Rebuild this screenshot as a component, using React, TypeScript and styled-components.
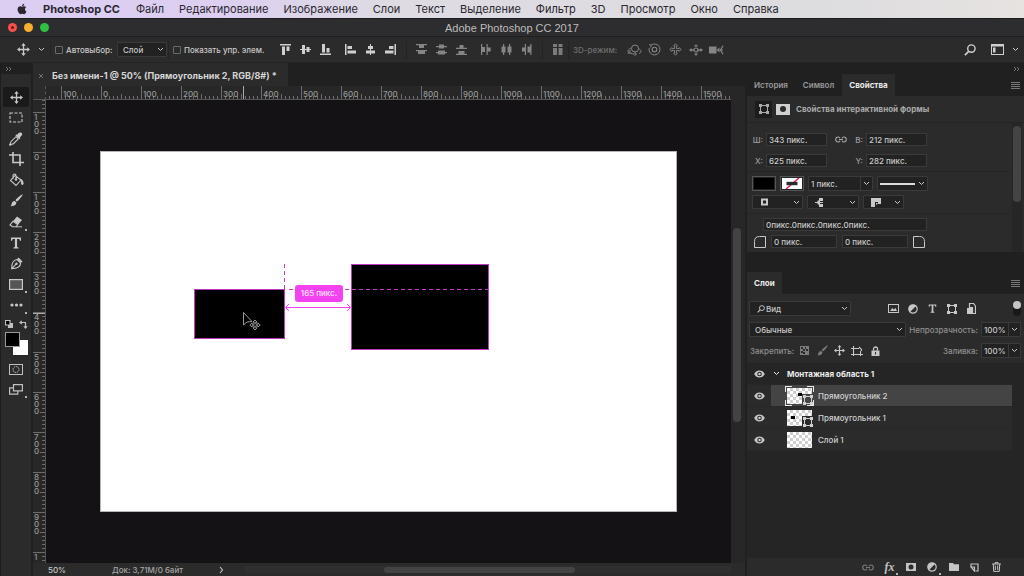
import React from "react";
import styled, { createGlobalStyle, css } from "styled-components";
import { FaApple } from "react-icons/fa";

const c = {
  panel: "#2b2b2b",
  dark: "#202021",
  list: "#252525",
  field: "#222222",
  line: "#3a3a3a",
  text: "#c9c9c9",
  bright: "#ececec",
  dim: "#8a8a8a",
  canvas: "#141215",
  magenta: "#f343f1",
  guide: "#c13ac6",
};

const Global = createGlobalStyle`
  *, *::before, *::after { box-sizing: border-box; }
  body { margin: 0; background: ${c.dark}; overflow: hidden; }
  button, input, select { font: inherit; color: inherit; margin: 0; padding: 0; }
  ul { list-style: none; margin: 0; padding: 0; }
  svg { display: block; flex: none; }
`;

const App = styled.div`
  height: 100vh;
  display: flex;
  flex-direction: column;
  font-family: Inter, "Liberation Sans", sans-serif;
  font-size: 8px;
  font-weight: 500;
  line-height: 12px;
  color: ${c.text};
  background: ${c.dark};
  cursor: default;
`;

/* ---------- System menu ---------- */
const MenuBar = styled.nav`
  flex: none;
  display: flex;
  align-items: center;
  gap: 15px;
  height: 18px;
  padding-left: 16px;
  background: linear-gradient(90deg, #dccdf3 0%, #dccff0 22%, #dedbe3 38%, #dddcdf 80%, #e6e3e1 100%);
  color: #2a2730;
  font-size: 11px;
  font-weight: 400;
  line-height: 16px;
`;
const MenuItem = styled.a<{ $bold?: boolean }>`
  color: inherit;
  text-decoration: none;
  white-space: nowrap;
  font-weight: ${(p) => (p.$bold ? 700 : 400)};
  ${(p) => p.$bold && css`padding-right: 1px;`}
`;

/* ---------- Title bar ---------- */
const TitleBar = styled.header`
  flex: none;
  display: grid;
  grid-template-columns: 1fr auto 1fr;
  align-items: center;
  height: 19px;
  padding: 0 8px;
  background: #2d2c2e;
  border-top: 1px solid #1d1c1e;
  border-bottom: 1px solid #1e1e1e;
  color: #bdbdbd;
`;
const Lights = styled.div`
  display: flex;
  gap: 7px;
`;
const Light = styled.button<{ $color: string }>`
  width: 9px;
  height: 9px;
  border: 0;
  border-radius: 50%;
  display: grid;
  place-items: center;
  background: ${(p) => p.$color};
`;
const Title = styled.h1`
  margin: 0;
  font-family: "Liberation Sans", sans-serif;
  font-size: 11px;
  font-weight: 400;
  line-height: 16px;
`;

/* ---------- Options bar ---------- */
const Options = styled.div`
  flex: none;
  display: flex;
  align-items: center;
  height: 26px;
  padding: 0 4px 0 13px;
  background: ${c.panel};
  border-bottom: 1px solid #242424;
  white-space: nowrap;
`;
const IconGroup = styled.div<{ $dim?: boolean; $end?: boolean }>`
  display: flex;
  margin-right: 5px;
  color: ${(p) => (p.$dim ? "#858585" : "#cfcfcf")};
  ${(p) => p.$end && css`margin: 0 0 0 auto;`}
`;
const IconButton = styled.button<{ $w?: number; $h?: number; $active?: boolean; $dim?: boolean }>`
  flex: none;
  position: relative;
  width: ${(p) => p.$w ?? 20}px;
  height: ${(p) => p.$h ?? 20}px;
  display: grid;
  place-items: center;
  border: 0;
  border-radius: 2px;
  background: ${(p) => (p.$active ? "#1a1a1b" : "transparent")};
  ${(p) => p.$dim && css`color: #7b7b7b;`}
`;
const EffectsButton = styled(IconButton)`
  font-family: "Liberation Serif", serif;
  font-size: 12px;
  font-style: italic;
  font-weight: 700;
`;
const Divider = styled.span`
  width: 1px;
  height: 18px;
  margin: 0 4px 0 1px;
  background: #242424;
`;
const CheckLabel = styled.label<{ $w: number }>`
  display: flex;
  align-items: center;
  gap: 3px;
  width: ${(p) => p.$w}px;
`;
const Check = styled.input`
  appearance: none;
  width: 8px;
  height: 8px;
  border: 1px solid #6a6a6a;
  border-radius: 1px;
`;
const ModeLabel = styled.span`
  width: 51px;
  color: #6f6f6f;
`;

/* ---------- Fields ---------- */
const SelectWrap = styled.span<{ $w?: number; $h?: number; $split?: boolean; $inset?: number }>`
  display: grid;
  grid-template-columns: minmax(0, 1fr) 12px;
  grid-template-rows: 100%;
  align-items: center;
  flex: none;
  width: ${(p) => p.$w ?? 50}px;
  height: ${(p) => p.$h ?? 15}px;
  border: 1px solid ${c.line};
  border-radius: 1px;
  background: ${c.field};
  color: ${c.text};
  & > select, & > input {
    grid-row: 1;
    grid-column: ${(p) => (p.$split ? "1 / 2" : "1 / 3")};
    appearance: none;
    width: 100%;
    height: 100%;
    border: 0;
    background: transparent;
    padding-left: ${(p) => p.$inset ?? 5}px;
    outline: 0;
  }
  & > input { padding-left: 2px; }
  & > svg, & > button { grid-row: 1; grid-column: 2; justify-self: center; }
`;
const SelectGlyph = styled.span<{ $flush?: boolean }>`
  grid-row: 1;
  grid-column: 1;
  padding-left: ${(p) => (p.$flush ? 2 : 7)}px;
  pointer-events: none;
`;
const DropButton = styled.button`
  width: 12px;
  height: 100%;
  display: grid;
  place-items: center;
  border: 0;
  border-left: 1px solid ${c.line};
  background: transparent;
`;
const Field = styled.input<{ $w?: number }>`
  flex: none;
  width: ${(p) => p.$w ?? 61}px;
  height: 13px;
  && { padding: 0 2px; }
  border: 1px solid ${c.line};
  background: ${c.field};
  color: ${c.text};
`;

/* ---------- Workspace ---------- */
const Workspace = styled.main`
  flex: 1;
  min-height: 0;
  display: flex;
`;
const Toolbox = styled.aside`
  flex: none;
  width: 31px;
  display: flex;
  flex-direction: column;
  background: ${c.panel};
  border-left: 1px solid #1d1d1d;
`;
const Strip = styled.div<{ $right?: boolean }>`
  flex: none;
  display: flex;
  align-items: center;
  justify-content: ${(p) => (p.$right ? "flex-end" : "flex-start")};
  height: 11px;
  padding: 0 4px;
  background: ${c.dark};
  color: #8c8c8c;
`;
const ToolList = styled.div`
  display: flex;
  flex-direction: column;
  justify-content: space-between;
  height: 228px;
  margin: 13px 2px 0;
  color: #c8c8c8;
`;
const ToolFoot = styled.div`
  display: flex;
  flex-direction: column;
  align-items: center;
  margin: 2px 2px 0;
  color: #c0c0c0;
`;
const SwapRow = styled.div`
  display: flex;
  gap: 6px;
  height: 14px;
  align-items: center;
`;
const Swatches = styled.div`
  display: grid;
  grid-template-columns: 8px 7px 8px;
  grid-template-rows: 8px 7px 8px;
  margin: 1px 0 4px;
`;
const Swatch = styled.button<{ $back?: boolean }>`
  grid-area: ${(p) => (p.$back ? "2 / 2 / 4 / 4" : "1 / 1 / 3 / 3")};
  border: 1px solid ${(p) => (p.$back ? "#fff" : "#999")};
  background: ${(p) => (p.$back ? "#fff" : "#000")};
`;

const Document = styled.section`
  flex: 1;
  min-width: 0;
  display: grid;
  grid-template-columns: 13px minmax(0, 1fr) 14px;
  grid-template-rows: 23px 14px minmax(0, 1fr) 13px;
  margin: 0 2px;
  background: ${c.panel};
`;
const TabBar = styled.div`
  grid-column: 1 / 4;
  display: flex;
  background: ${c.dark};
`;
const DocTab = styled.div`
  display: flex;
  align-items: center;
  gap: 8px;
  width: 255px;
  padding: 3px 0 0 5px;
  background: ${c.panel};
  color: #d6d6d6;
  font-size: 9px;
  font-weight: 700;
  white-space: nowrap;
`;
const RulerCorner = styled.div`
  border-right: 1px dashed #555;
  border-bottom: 1px solid #555;
  background: ${c.panel};
`;
const tick = (dir: string) => `linear-gradient(to ${dir}, #6c6c6c 1px, transparent 1px)`;
const RulerTop = styled.div`
  display: flex;
  overflow: hidden;
  padding-left: 15px;
  border-bottom: 1px solid #555;
  background:
    ${tick("right")} 3px 100% / 4px 3px repeat-x,
    ${tick("right")} 35px 100% / 40px 5px repeat-x,
    linear-gradient(#aaa, #aaa) 197px 0 / 1px 13px no-repeat,
    #272727;
  color: #979797;
`;
const TopMark = styled.span`
  flex: 0 0 40px;
  border-left: 1px solid #6c6c6c;
  padding: 3px 0 0 1px;
  line-height: 10px;
`;
const RulerLeft = styled.div`
  overflow: hidden;
  padding-top: 12px;
  border-right: 1px solid #555;
  background:
    ${tick("bottom")} 100% 0 / 3px 4px repeat-y,
    ${tick("bottom")} 100% 32px / 5px 40px repeat-y,
    linear-gradient(#aaa, #aaa) 0 213px / 12px 1px no-repeat,
    #272727;
  color: #979797;
`;
const LeftMark = styled.span`
  display: block;
  height: 40px;
  border-top: 1px solid #6c6c6c;
  padding: 1px 0 0 1px;
  line-height: 7px;
  white-space: pre-line;
`;
const Canvas = styled.div`
  overflow: hidden;
  padding: 51px 54px;
  background: ${c.canvas};
`;
const Artboard = styled.div`
  position: relative;
  width: 577px;
  height: 361px;
  background: #fff;
  border: 1px solid #b5b5b5;
`;
const Shape = styled.div<{ $x: number; $y: number; $w: number; $h: number }>`
  position: absolute;
  left: ${(p) => p.$x}px;
  top: ${(p) => p.$y}px;
  width: ${(p) => p.$w}px;
  height: ${(p) => p.$h}px;
  background: #000;
  border: 1px solid ${c.guide};
`;
const Guides = styled.svg`
  position: absolute;
  left: 93px;
  top: 112px;
`;
const Distance = styled.output`
  position: absolute;
  left: 194px;
  top: 133px;
  width: 48px;
  height: 17px;
  border-radius: 3px;
  background: ${c.magenta};
  color: #ffe3ff;
  line-height: 17px;
  text-align: center;
`;
const Cursor = styled.svg`
  position: absolute;
  left: 141px;
  top: 159px;
`;
const VScroll = styled.div`
  grid-column: 3;
  grid-row: 2 / 4;
  padding: 142px 4px 0 2px;
  background: #272727;
`;
const Thumb = styled.div<{ $w: string; $h: string; $color?: string }>`
  width: ${(p) => p.$w};
  height: ${(p) => p.$h};
  border-radius: 4px;
  background: ${(p) => p.$color ?? "#434343"};
`;
const Status = styled.footer`
  grid-column: 1 / 4;
  display: flex;
  align-items: center;
  padding-left: 15px;
  background: ${c.panel};
`;
const Zoom = styled.input`
  width: 32px;
  height: 12px;
  border: 0;
  background: transparent;
`;
const DocSize = styled.span`
  width: 117px;
  padding-left: 32px;
  white-space: nowrap;
  color: #a5a5a5;
`;
const HTrack = styled.div`
  flex: 1;
  margin-right: 14px;
  padding: 1px 0 0 20%;
  background: #2f2f2f;
`;

/* ---------- Panels ---------- */
const Dock = styled.aside`
  flex: none;
  width: 277px;
  display: flex;
  flex-direction: column;
  background: ${c.dark};
`;
const Tabs = styled.div`
  flex: none;
  display: flex;
  gap: 1px;
  height: 22px;
  padding-right: 4px;
`;
const Tab = styled.button<{ $active?: boolean }>`
  padding: 0 7px;
  border: 0;
  background: ${(p) => (p.$active ? c.panel : "transparent")};
  color: ${(p) => (p.$active ? c.bright : "#9a9a9a")};
  font-weight: ${(p) => (p.$active ? 700 : 600)};
`;
const PanelMenu = styled.button`
  margin-left: auto;
  border: 0;
  background: transparent;
  color: #777;
`;
const Properties = styled.section`
  display: flex;
  flex-direction: column;
  height: 156px;
  margin-bottom: 20px;
  background: ${c.panel};
`;
const PropHead = styled.div`
  display: flex;
  align-items: center;
  height: 27px;
  padding-left: 8px;
  border-bottom: 1px solid #242424;
  color: #a9a9a9;
  & > h2 { margin: 0 0 0 6px; font-size: 8px; font-weight: 700; }
`;
const ModeIcon = styled.button<{ $active?: boolean }>`
  display: grid;
  place-items: center;
  width: ${(p) => (p.$active ? 17 : 14)}px;
  height: ${(p) => (p.$active ? 17 : 11)}px;
  margin-right: ${(p) => (p.$active ? 4 : 0)}px;
  border: 0;
  background: ${(p) => (p.$active ? "#1c1c1c" : "#d0d0d0")};
`;
const PropBody = styled.div`
  flex: 1;
  display: flex;
  justify-content: space-between;
  padding-right: 2px;
`;
const PropRows = styled.div`
  flex: 1;
  margin-right: 2px;
`;
const PropGroup = styled.div<{ $top: number; $gap: number }>`
  display: flex;
  flex-direction: column;
  gap: ${(p) => p.$gap}px;
  padding: ${(p) => p.$top}px 0 4px 5px;
  & + & { border-top: 1px solid #252525; }
`;
const Row = styled.div<{ $gap?: number; $indent?: number }>`
  display: flex;
  align-items: center;
  gap: ${(p) => p.$gap ?? 4}px;
  padding-left: ${(p) => p.$indent ?? 0}px;
`;
const FieldLabel = styled.label<{ $w: number }>`
  display: flex;
  justify-content: flex-end;
  align-items: center;
  gap: 3px;
  width: ${(p) => p.$w}px;
  color: #9b9b9b;
`;
const LinkSlot = styled.button`
  width: 27px;
  display: grid;
  place-items: center;
  border: 0;
  background: transparent;
  color: #a5a5a5;
`;
const FillSwatch = styled.button`
  width: 24px;
  height: 15px;
  border: 1px solid #555;
  outline: 1px solid #222;
  outline-offset: -2px;
  background: #000;
  display: grid;
  place-items: center;
`;
const PanelScroll = styled.div`
  width: 10px;
  padding: 3px 1px;
  background: #262626;
`;

const Layers = styled.section`
  flex: 1;
  min-height: 0;
  display: flex;
  flex-direction: column;
  background: ${c.list};
`;
const Controls = styled.div`
  display: flex;
  flex-direction: column;
  gap: 6px;
  padding: 7px 3px 5px 2px;
  background: ${c.panel};
`;
const ControlRow = styled.div`
  display: flex;
  align-items: center;
  height: 15px;
  color: #c8c8c8;
`;
const Muted = styled.label`
  display: flex;
  align-items: center;
  gap: 3px;
  margin-left: auto;
  color: #909090;
  white-space: nowrap;
`;
const LockText = styled.span`
  width: 46px;
  padding-left: 1px;
  color: #909090;
  white-space: nowrap;
`;
const FilterIcons = styled.div`
  display: flex;
  margin: 0 auto 0 32px;
`;
const Switch = styled.button`
  width: 8px;
  height: 15px;
  border: 0;
  border-radius: 4px;
  background: #191919;
  display: flex;
  & > span { width: 8px; height: 8px; border-radius: 50%; background: #c6c6c6; }
`;
const LayerList = styled.ul`
  flex: 1;
  margin-right: 12px;
`;
const LayerRow = styled.li<{ $selected?: boolean; $group?: boolean }>`
  display: grid;
  grid-template-columns: 24px 1fr;
  grid-template-rows: 100%;
  height: 22px;
  align-items: center;
  background: ${(p) => (p.$group ? c.list : c.panel)};
  border-bottom: 1px solid #272727;
  & > div { background: ${(p) => (p.$selected ? "#444444" : "transparent")}; }
`;
const LayerBody = styled.div<{ $group?: boolean }>`
  display: flex;
  align-items: center;
  height: 100%;
  gap: 5px;
  padding-left: ${(p) => (p.$group ? 0 : 15)}px;
  color: ${(p) => (p.$group ? c.bright : "#cfcfcf")};
  font-weight: ${(p) => (p.$group ? 700 : 500)};
`;
const GroupToggle = styled.button`
  width: 11px;
  border: 0;
  background: transparent;
  display: grid;
  place-items: center;
`;
const LayerActions = styled.div`
  flex: none;
  display: flex;
  justify-content: flex-end;
  align-items: center;
  height: 18px;
  padding-right: 17px;
  background: ${c.panel};
  color: #c4c4c4;
`;

/* ---------- Icons ---------- */
type G = { w?: number; h?: number; vb?: string; children: React.ReactNode; stroke?: boolean };
const Svg = ({ w = 12, h = 12, vb, children, stroke }: G) => (
  <svg
    width={w}
    height={h}
    viewBox={vb ?? `0 0 ${w} ${h}`}
    fill={stroke ? "none" : "currentColor"}
    stroke={stroke ? "currentColor" : "none"}
    strokeWidth={1.2}
    aria-hidden="true"
  >
    {children}
  </svg>
);
const Chevron = () => (
  <Svg w={7} h={5} stroke><path d="M1 1l2.5 2.5L6 1" strokeWidth="1" /></Svg>
);
const DoubleArrow = () => (
  <Svg w={7} h={6} stroke><path d="M1 1l2 2-2 2M4 1l2 2-2 2" strokeWidth=".8" /></Svg>
);
const MoveIcon = ({ s = 13 }: { s?: number }) => (
  <Svg w={s} h={s} vb="0 0 14 14">
    <path d="M7 0l2.400 3H7.700v3.300H11V4.600L14 7l-3 2.400V7.700H7.700V11h1.700L7 14l-2.400-3h1.700V7.700H3v1.700L0 7l3-2.400v1.700h3.300V3H4.600z" />
  </Svg>
);
const AlignIcon = ({ kind }: { kind: string }) => {
  const shapes: Record<string, React.ReactNode> = {
    top: <path d="M0 0h11v1.500H0zM2 2.500h3V11H2zM6.500 2.500h3V7h-3z" />,
    middle: <path d="M0 5h11v1H0zM2 1h3v9H2zM6.500 3h3v5h-3z" />,
    bottom: <path d="M0 9.500h11V11H0zM2 0h3v8.500H2zM6.500 4h3v4.500h-3z" />,
    left: <path d="M0 0h1.500v11H0zM2.500 2H7v3H2.500zM2.500 6.500H11v3H2.500z" />,
    center: <path d="M5 0h1v11H5zM3 2h5v3H3zM1 6.500h9v3H1z" />,
    right: <path d="M9.500 0H11v11H9.500zM4 2h4.500v3H4zM0 6.500h8.500v3H0z" />,
    dTop: <path d="M0 0h11v1.200H0zM3 1.200h5V4H3zM0 6h11v1.200H0zM2 7.200h7V10H2z" />,
    dMid: <path d="M0 2h11v1.200H0zM3 .5h5v4H3zM0 8h11v1.200H0zM2 6.500h7v4H2z" />,
    dBottom: <path d="M3.500 1h4v2.800h-4zM0 3.800h11V5H0zM2.500 7h6v2.800h-6zM0 9.800h11V11H0z" />,
    dLeft: <path d="M0 0h1.200v11H0zM1.200 3H4v5H1.200zM5.500 0h1.200v11H5.500zM6.700 3.500h3v4h-3z" />,
    dCenter: <path d="M2 0h1.200v11H2zM.5 2.500h4v6h-4zM8 0h1.200v11H8zM6.500 2.500h4v6h-4z" />,
    dRight: <path d="M3.800 0H5v11H3.800zM1 3.500h2.800v4H1zM9.300 0h1.200v11H9.300zM6.500 2.500h2.800v6H6.500z" />,
    auto: <path d="M1 0h4v3H1zM1 4h4v7H1zM6.500 0h4v3h-4zM6.500 4h4v7h-4z" />,
  };
  return <Svg w={11} h={11}>{shapes[kind]}</Svg>;
};
const BoxIcon = ({ s = 11 }: { s?: number }) => (
  <Svg w={s} h={s} vb="0 0 10 10">
    <path d="M0 0h3v3H0zM7 0h3v3H7zM0 7h3v3H0zM7 7h3v3H7zM3 1h4v1H3zM3 8h4v1H3zM1 3h1v4H1zM8 3h1v4H8z" />
  </Svg>
);
const Search = ({ s = 12 }: { s?: number }) => (
  <Svg w={s} h={s} vb="0 0 13 13" stroke>
    <circle cx="8" cy="5" r="4" strokeWidth="1.500" /><path d="M5 8L1 12" strokeWidth="1.800" />
  </Svg>
);
const Eye = () => (
  <Svg w={11} h={8} vb="0 0 12 9">
    <path fillRule="evenodd" d="M0 4.500C1.500 1.800 3.500.6 6 .6s4.500 1.200 6 3.900c-1.500 2.700-3.500 3.900-6 3.900S1.500 7.200 0 4.500zM6 1.900a2.600 2.600 0 100 5.200 2.600 2.600 0 000-5.200z" />
    <circle cx="6" cy="4.500" r="1.400" />
  </Svg>
);
const LinkIcon = () => (
  <Svg w={12} h={7} stroke>
    <path d="M5 2.200A2 2 0 003.200 1 2.500 2.500 0 003.200 6 2 2 0 005 4.800M7 2.200A2 2 0 018.800 1a2.500 2.500 0 010 5A2 2 0 017 4.800M4 3.500h4" strokeWidth="1.100" />
  </Svg>
);
const HalfCircle = () => (
  <Svg w={10} h={10}>
    <circle cx="5" cy="5" r="4.200" fill="none" stroke="currentColor" />
    <path d="M8 2A4.200 4.200 0 002 8z" />
  </Svg>
);
const TypeIcon = ({ s = 12 }: { s?: number }) => (
  <Svg w={s} h={s} vb="0 0 12 12">
    <path d="M1 .5h10v3.200h-1.100L9.300 2H7.100v8l1.400.5v1h-5v-1L4.900 10V2H2.700l-.6 1.700H1z" />
  </Svg>
);
const BrushIcon = ({ s = 13 }: { s?: number }) => (
  <Svg w={s} h={s} vb="0 0 13 13">
    <path d="M12.600.4c.5.600-3.800 6-5.600 7.300L5.500 6.200C6.900 4.400 12 0 12.600.4zM4.700 7l1.600 1.600c.2 2.500-2.600 4-6 3.500 1.600-.8 1-1.800 1.700-3.300C2.500 7.600 3.600 7 4.700 7z" />
  </Svg>
);
const Flyout = styled.i`
  position: absolute;
  right: 2px;
  bottom: 1px;
  width: 2px;
  height: 2px;
  background: #b5b5b5;
`;

const tools: { name: string; icon: React.ReactNode; more?: boolean }[] = [
  { name: "Перемещение", icon: <MoveIcon /> },
  {
    name: "Прямоугольная область",
    icon: <Svg w={14} h={11} stroke><rect x="1" y="1" width="12" height="9" strokeDasharray="3 1.500" strokeWidth="1.100" /></Svg>,
  },
  {
    name: "Пипетка",
    icon: (
      <Svg w={14} h={14}>
        <path d="M9 1.800c1-1 1.800-1.600 2.800-1.200 1.600.6 2 2 .7 3.200L10.800 5.500l.6.700-1 1-4-4 1-1 .6.700z" />
        <path d="M7 4.700l2.200 2.200-5 5-1.700.4-1.300 1-.6-.600.9-1.400.4-1.600z" fill="none" stroke="currentColor" strokeWidth="1.100" />
      </Svg>
    ),
  },
  {
    name: "Рамка",
    icon: <Svg w={15} h={14} stroke><path d="M4 0v10.500h11M0 3h11v11" strokeWidth="1.600" /></Svg>,
  },
  {
    name: "Заливка",
    icon: (
      <Svg w={15} h={14}>
        <path d="M6 2.500l6 4.500-5 5.500-5.500-5zM4 6V2.500C4 .5 7 .5 7 2.500V6" fill="none" stroke="currentColor" strokeWidth="1.100" />
        <circle cx="7" cy="6.500" r="1.200" /><path d="M11 5.500c2 .8 3.600 2.500 3.600 5 0 1.700-2.300 1.900-2.500.2-.1-1.500.4-3-1.100-5.200z" />
      </Svg>
    ),
  },
  { name: "Кисть", icon: <BrushIcon /> },
  {
    name: "Ластик",
    icon: (
      <Svg w={14} h={12}>
        <path d="M8 .5L13 4 9.200 8.500l-5-3.600z" />
        <path d="M4 5.200l4.700 3.400L7 10.800H3.500L1 8.800z" fill="none" stroke="currentColor" strokeWidth="1.100" />
        <path d="M7 10.300h6v1H7z" />
      </Svg>
    ),
    more: true,
  },
  { name: "Текст", icon: <TypeIcon /> },
  {
    name: "Перо",
    icon: (
      <Svg w={13} h={13}>
        <path d="M8.500.5l4 4-1.400 1.300L7.200 1.900z" />
        <path d="M7 2.500l3.600 3.600c0 3-2.600 5.400-8.900 5.700C1.500 6 4 3 7 2.500zM1.700 11.800L6 7.200" fill="none" stroke="currentColor" strokeWidth="1.100" />
        <circle cx="6.400" cy="6.800" r="1.200" />
      </Svg>
    ),
  },
  {
    name: "Прямоугольник",
    icon: <Svg w={14} h={11} stroke><rect x=".6" y=".6" width="12.800" height="9.800" fill="#555" /></Svg>,
    more: true,
  },
  {
    name: "Другие инструменты",
    icon: <Svg w={13} h={4}><circle cx="2" cy="2" r="1.600" /><circle cx="6.500" cy="2" r="1.600" /><circle cx="11" cy="2" r="1.600" /></Svg>,
    more: true,
  },
];

const checker = "repeating-conic-gradient(#cfcfcf 0 25%, #fff 0 50%) 0 0 / 6px 6px";
const LayerThumb = styled.span<{ $selected?: boolean }>`
  position: relative;
  flex: none;
  width: 27px;
  height: 18px;
  padding: 1px;
  & > span { display: block; width: 25px; height: 16px; background: ${checker}; }
  ${(p) =>
    p.$selected &&
    css`
      &::before, &::after {
        content: "";
        position: absolute;
        inset: -1px;
        border: 1px solid #e8e8e8;
        clip-path: polygon(0 0, 7px 0, 7px 2px, 2px 2px, 2px 6px, 0 6px, 0 14px, 2px 14px, 2px 18px, 7px 18px, 7px 100%, 0 100%);
      }
      &::before { clip-path: polygon(0 0, 7px 0, 7px 2px, 2px 6px, 0 6px); }
      &::before, &::after {
        border: 0;
        clip-path: none;
        background:
          linear-gradient(#e8e8e8, #e8e8e8) 0 0 / 7px 1px,
          linear-gradient(#e8e8e8, #e8e8e8) 0 0 / 1px 6px,
          linear-gradient(#e8e8e8, #e8e8e8) 0 100% / 7px 1px,
          linear-gradient(#e8e8e8, #e8e8e8) 0 100% / 1px 6px,
          linear-gradient(#e8e8e8, #e8e8e8) 100% 0 / 7px 1px,
          linear-gradient(#e8e8e8, #e8e8e8) 100% 0 / 1px 6px,
          linear-gradient(#e8e8e8, #e8e8e8) 100% 100% / 7px 1px,
          linear-gradient(#e8e8e8, #e8e8e8) 100% 100% / 1px 6px;
        background-repeat: no-repeat;
      }
    `}
`;
const ThumbMark = styled.b<{ $x: number; $y: number; $w: number }>`
  position: absolute;
  left: ${(p) => p.$x}px;
  top: ${(p) => p.$y}px;
  width: ${(p) => p.$w}px;
  height: 3px;
  background: #000;
`;
const ThumbBadge = styled.i<{ $selected?: boolean }>`
  position: absolute;
  right: 0;
  bottom: 0;
  padding: 1px 0 0 1px;
  color: #d0d0d0;
  background: ${(p) => (p.$selected ? "#444" : c.panel)};
`;

const menu = ["Файл", "Редактирование", "Изображение", "Слои", "Текст", "Выделение", "Фильтр", "3D", "Просмотр", "Окно", "Справка"];
const topMarks = [100, 0, 100, 200, 300, 400, 500, 600, 700, 800, 900, 1000, 1100, 1200, 1300, 1400, 1500];
const leftMarks = [100, 0, 100, 200, 300, 400, 500, 600, 700, 800, 900, 1];
const layers = [
  { name: "Прямоугольник 2", selected: true, mark: { x: 12, y: 6, w: 4 } },
  { name: "Прямоугольник 1", mark: { x: 5, y: 7, w: 4 } },
  { name: "Слой 1" },
];

function Picker({ w, h, label, value }: { w: number; h?: number; label: string; value: string }) {
  return (
    <SelectWrap $w={w} $h={h}>
      <select aria-label={label} defaultValue={value}>
        <option>{value}</option>
      </select>
      <Chevron />
    </SelectWrap>
  );
}
type GlyphProps = { w: number; label: string; glyph: React.ReactNode; h?: number; flush?: boolean; inset?: number; value?: string };
function GlyphPicker({ w, label, glyph, h = 14, flush, inset, value }: GlyphProps) {
  return (
    <SelectWrap $w={w} $h={h} $inset={inset}>
      <select aria-label={label}>{value && <option>{value}</option>}</select>
      <SelectGlyph $flush={flush}>{glyph}</SelectGlyph>
      <Chevron />
    </SelectWrap>
  );
}
function Combo({ w, label, value }: { w: number; label: string; value: string }) {
  return (
    <SelectWrap $w={w} $split>
      <input aria-label={label} defaultValue={value} />
      <DropButton aria-label={`${label}: список`}><Chevron /></DropButton>
    </SelectWrap>
  );
}

function AlignGroup({ kinds, dim }: { kinds: string[]; dim?: boolean }) {
  return (
    <IconGroup $dim={dim}>
      {kinds.map((k) => <IconButton key={k} aria-label={k}><AlignIcon kind={k} /></IconButton>)}
    </IconGroup>
  );
}

function OptionsBar() {
  return (
    <Options>
      <IconButton aria-label="Инструмент"><MoveIcon s={13} /></IconButton>
      <IconButton $w={16} aria-label="Наборы"><Chevron /></IconButton>
      <Divider />
      <CheckLabel $w={62}><Check type="checkbox" />Автовыбор:</CheckLabel>
      <Picker w={50} label="Объект автовыбора" value="Слой" />
      <Divider />
      <CheckLabel $w={102}><Check type="checkbox" />Показать упр. элем.</CheckLabel>
      <AlignGroup kinds={["top", "middle", "bottom"]} />
      <AlignGroup kinds={["left", "center", "right"]} />
      <Divider />
      <AlignGroup dim kinds={["dTop", "dMid", "dBottom"]} />
      <AlignGroup dim kinds={["dLeft", "dCenter", "dRight"]} />
      <Divider />
      <IconButton $dim aria-label="auto"><AlignIcon kind="auto" /></IconButton>
      <Divider />
      <ModeLabel>3D-режим:</ModeLabel>
      <IconGroup $dim>
        <IconButton aria-label="Поворот">
          <Svg w={15} h={12} stroke>
            <circle cx="8" cy="4.500" r="3.500" strokeWidth="1" />
            <path d="M4.500 4C1 5 0 7 2 8.500c2 1.500 5 1.500 7 1.500M11.500 4.500c3 1.500 3.500 4 .5 5M7.500 8.300L9.500 10l-2 1.700M3 6v3H.5" strokeWidth="1" />
          </Svg>
        </IconButton>
        <IconButton $w={21} aria-label="Вращение">
          <Svg w={13} h={13} stroke>
            <path d="M3 2.200A5.500 5.500 0 111.200 5M1 1.500l2.300.7L2.600 4.600" strokeWidth="1" /><circle cx="6.500" cy="6.500" r="2.300" strokeWidth="1.100" />
          </Svg>
        </IconButton>
        <IconButton aria-label="Перетаскивание">
          <Svg w={13} h={13} vb="0 0 14 14" stroke>
            <path d="M7 .8l2 2.400H8V6h2.800V5l2.400 2-2.400 2V8H8v2.800h1L7 13.200l-2-2.400h1V8H3.200v1L.8 7l2.400-2v1H6V3.200H5z" strokeWidth="1" />
          </Svg>
        </IconButton>
        <IconButton $w={21} aria-label="Скольжение">
          <Svg w={14} h={12}>
            <path d="M7 0l2 2.500H5zM7 12l2-2.500H5zM0 6l2.500-2v1.300H5v1.400H2.500V8zM14 6l-2.500-2v1.300H9v1.400h2.500V8z" />
            <circle cx="7" cy="6" r="2" fill="none" stroke="currentColor" />
          </Svg>
        </IconButton>
        <IconButton aria-label="Масштаб">
          <Svg w={15} h={10}>
            <path d="M0 1.500h7.500v7H0zM7.500 5l3-2.500v5z" /><path d="M14 .8L11.500 5 14 9.200M12 5h2" fill="none" stroke="currentColor" />
          </Svg>
        </IconButton>
      </IconGroup>
      <IconGroup $end>
        <IconButton $w={26} aria-label="Поиск"><Search /></IconButton>
        <IconButton $w={28} aria-label="Рабочая среда">
          <Svg w={13} h={11}><path fillRule="evenodd" d="M0 0h13v11H0zM1 2.500V10h11V2.500z" /><path d="M2 3.500h2.500v5H2z" /></Svg>
        </IconButton>
        <IconButton $w={9} aria-label="Список сред"><Chevron /></IconButton>
      </IconGroup>
    </Options>
  );
}

function ToolPanel() {
  return (
    <Toolbox>
      <Strip><DoubleArrow /></Strip>
      <ToolList>
        {tools.map((t, i) => (
          <IconButton key={t.name} $w={26} $active={i === 0} aria-label={t.name}>
            {t.icon}
            {t.more && <Flyout />}
          </IconButton>
        ))}
      </ToolList>
      <ToolFoot>
        <SwapRow>
          <IconButton $w={9} $h={9} aria-label="Цвета по умолчанию">
            <Svg w={8} h={8}><path d="M3 3h5v5H3z" /><path d="M.5.5h4.500V5H.5z" fill="#000" stroke="currentColor" /></Svg>
          </IconButton>
          <IconButton $w={9} $h={9} aria-label="Поменять цвета">
            <Svg w={9} h={9}><path d="M1.500 2.500H6.500V7" fill="none" stroke="currentColor" strokeWidth="1.200" /><path d="M0 2.500L2.800.3v4.400zM6.500 9L4.300 6.200h4.400z" /></Svg>
          </IconButton>
        </SwapRow>
        <Swatches>
          <Swatch $back aria-label="Фон" />
          <Swatch aria-label="Основной цвет" />
        </Swatches>
        <IconButton $w={26} aria-label="Быстрая маска">
          <Svg w={14} h={11} stroke><rect x=".5" y=".5" width="13" height="10" strokeWidth="1" /><circle cx="7" cy="5.500" r="3" strokeDasharray="1.500 .8" strokeWidth="1" /></Svg>
        </IconButton>
        <IconButton $w={26} aria-label="Режим экрана">
          <Svg w={14} h={11} stroke><path d="M4.500.6h8.900v6.300H4.500zM4.500 3.800H.6v6.300h8.200V7" /></Svg>
          <Flyout />
        </IconButton>
      </ToolFoot>
    </Toolbox>
  );
}

function DocumentView() {
  return (
    <Document>
      <TabBar>
        <DocTab>
          <IconButton $w={6} $h={8} $dim aria-label="Закрыть"><Svg w={6} h={6} stroke><path d="M1 1l4 4M5 1L1 5" strokeWidth=".9" /></Svg></IconButton>
          Без имени-1 @ 50% (Прямоугольник 2, RGB/8#) *
        </DocTab>
      </TabBar>
      <RulerCorner />
      <RulerTop>{topMarks.map((m, i) => <TopMark key={i}>{m}</TopMark>)}</RulerTop>
      <VScroll><Thumb $w="8px" $h="194px" /></VScroll>
      <RulerLeft>{leftMarks.map((m, i) => <LeftMark key={i}>{String(m).split("").join("\n")}</LeftMark>)}</RulerLeft>
      <Canvas>
        <Artboard>
          <Shape $x={93} $y={137} $w={91} $h={50} />
          <Shape $x={250} $y={112} $w={138} $h={86} />
          <Guides width="296" height="88" fill="none" stroke={c.guide}>
            <path d="M90.500 0v25" strokeDasharray="4 3" />
            <path d="M95 25.500h200" strokeDasharray="4 3" />
            <path d="M92 43.500h64M95 40l-3.500 3.500L95 47M153 40l3.500 3.500L153 47" stroke={c.magenta} />
          </Guides>
          <Distance>165 пикс.</Distance>
          <Cursor width="20" height="22" fill="none" stroke="#a8a8a8" strokeWidth=".9">
            <path d="M1.500 1.500v12.500l3.500-3 5-.5z" fill="#000" />
            <path d="M13 9l2 2.200h-1.200v2H16v-1.200l2.200 2-2.200 2v-1.200h-2.200v2H15L13 19l-2-2.200h1.200v-2H10V16l-2.200-2L10 12v1.200h2.200v-2H11z" />
          </Cursor>
        </Artboard>
      </Canvas>
      <Status>
        <Zoom aria-label="Масштаб" defaultValue="50%" />
        <DocSize>Док: 3,71M/0 байт</DocSize>
        <IconButton $w={48} $h={12} aria-label="Сведения"><Svg w={5} h={8} stroke><path d="M1 1l2.500 3L1 7" strokeWidth="1.100" /></Svg></IconButton>
        <HTrack><Thumb $w="191px" $h="6px" /></HTrack>
      </Status>
    </Document>
  );
}

const MenuLines = () => <Svg w={9} h={7}><path d="M0 0h9v1H0zM0 2h9v1H0zM0 4h9v1H0zM0 6h9v1H0z" /></Svg>;

function PropertiesPanel() {
  return (
    <Properties>
      <PropHead>
        <ModeIcon $active aria-label="Фигура"><BoxIcon s={10} /></ModeIcon>
        <ModeIcon aria-label="Маска"><Svg w={6} h={6}><circle cx="3" cy="3" r="3" fill="#2b2b2b" /></Svg></ModeIcon>
        <h2>Свойства интерактивной формы</h2>
      </PropHead>
      <PropBody>
        <PropRows>
          <PropGroup $top={10} $gap={8}>
            <Row $gap={0}>
              <FieldLabel $w={75}>Ш:<Field defaultValue="343 пикс." /></FieldLabel>
              <LinkSlot aria-label="Связать"><LinkIcon /></LinkSlot>
              <FieldLabel $w={73}>В:<Field defaultValue="212 пикс." /></FieldLabel>
            </Row>
            <Row $gap={27}>
              <FieldLabel $w={75}>X:<Field defaultValue="625 пикс." /></FieldLabel>
              <FieldLabel $w={73}>Y:<Field defaultValue="282 пикс." /></FieldLabel>
            </Row>
          </PropGroup>
          <PropGroup $top={4} $gap={4}>
            <Row>
              <FillSwatch aria-label="Заливка фигуры" />
              <FillSwatch aria-label="Обводка фигуры">
                <Svg w={20} h={11}><path d="M0 0h20v11H0z" fill="#fff" /><path d="M4 11L17 0" stroke="#d8305c" strokeWidth="1.600" /><path d="M4.500 3.800h11v3.400h-11z" fill="#2b2b2b" /></Svg>
              </FillSwatch>
              <Combo w={65} label="Толщина" value="1 пикс." />
              <GlyphPicker w={51} h={15} flush label="Тип обводки" glyph={<Svg w={35} h={2}><rect width="35" height="2" fill="#dcdcdc" /></Svg>} />
            </Row>
            <Row>
              <GlyphPicker w={51} label="Выравнивание обводки" glyph={<Svg w={9} h={8} stroke><path d="M2 1.500h5v5H2z" strokeWidth="2" /></Svg>} />
              <GlyphPicker w={52} label="Концы" glyph={<Svg w={9} h={9}><path d="M4 0h4v3H5v3h3v3H4V6.500H2.500v-4H4zM0 4h8v1H0z" /></Svg>} />
              <GlyphPicker w={41} label="Углы" glyph={<Svg w={10} h={9}><path fillRule="evenodd" d="M0 0h10v6H7V4H4v5H0zM5 5h1.500v1.500H5z" /></Svg>} />
            </Row>
          </PropGroup>
          <PropGroup $top={4} $gap={4}>
            <Row $indent={11}><Field $w={164} aria-label="Радиусы" defaultValue="0пикс.0пикс.0пикс.0пикс." /></Row>
            <Row $indent={2} $gap={5}>
              <Svg w={12} h={12} stroke><path d="M.5 11.500v-6q0-5 5-5h6v11z" strokeWidth="1" /></Svg>
              <Field $w={66} aria-label="Левый верхний радиус" defaultValue="0 пикс." />
              <Field $w={66} aria-label="Правый верхний радиус" defaultValue="0 пикс." />
              <Svg w={12} h={12} stroke><path d="M.5.5h6q5 0 5 5v6H.5z" strokeWidth="1" /></Svg>
            </Row>
          </PropGroup>
        </PropRows>
        <PanelScroll><Thumb $w="8px" $h="76px" $color="#444" /></PanelScroll>
      </PropBody>
    </Properties>
  );
}

function LayersPanel() {
  return (
    <Layers>
      <Controls>
        <ControlRow>
          <GlyphPicker w={102} h={15} inset={16} label="Фильтр слоёв" value="Вид" glyph={<Search s={8} />} />
          <FilterIcons>
            <IconButton aria-label="Пиксели"><Svg w={11} h={9}><path fillRule="evenodd" d="M0 0h11v9H0zM1 1v7h9V1z" /><path d="M2 7l2.200-3 1.600 1.500L7.500 4 9 7z" /></Svg></IconButton>
            <IconButton $w={19} aria-label="Коррекция"><HalfCircle /></IconButton>
            <IconButton aria-label="Текст"><TypeIcon s={9} /></IconButton>
            <IconButton $w={19} aria-label="Фигуры"><BoxIcon s={10} /></IconButton>
            <IconButton aria-label="Смарт-объекты"><Svg w={9} h={11}><path d="M2.500.5h4L8.500 3v7.500h-3V4.500h-3z" fill="none" stroke="currentColor" /><path d="M0 5h5.500v6H0z" /></Svg></IconButton>
          </FilterIcons>
          <Switch aria-label="Включить фильтр"><span /></Switch>
        </ControlRow>
        <ControlRow>
          <Picker w={157} label="Режим наложения" value="Обычные" />
          <Muted>Непрозрачность:<Combo w={40} label="Непрозрачность" value="100%" /></Muted>
        </ControlRow>
        <ControlRow>
          <LockText>Закрепить:</LockText>
          <IconButton $w={18} $dim aria-label="Прозрачность"><Svg w={9} h={9}><path fillRule="evenodd" d="M0 0h9v9H0zM1 1v2h2V1zM5 1v2H3v2H1v2h2v1h2V6H3V5h2V3h1v2h2V3H6V1z" /></Svg></IconButton>
          <IconButton $w={18} $dim aria-label="Пиксели"><BrushIcon s={11} /></IconButton>
          <IconButton $w={17} aria-label="Положение"><MoveIcon s={11} /></IconButton>
          <IconButton $w={18} aria-label="Монтажная область"><Svg w={12} h={10} stroke><path d="M2.500 0v10M0 2.500h8M9.500 5v5M0 8.500h12M8 1l2.500 2.500V5" strokeWidth="1.100" /></Svg></IconButton>
          <IconButton $w={18} aria-label="Закрепить всё"><Svg w={9} h={10}><path fillRule="evenodd" d="M.5 4.500h8V10h-8zM4 6v2.500h1V6z" /><path d="M2.500 4.500V3a2 2 0 014 0v1.500" fill="none" stroke="currentColor" strokeWidth="1.300" /></Svg></IconButton>
          <Muted>Заливка:<Combo w={40} label="Заливка" value="100%" /></Muted>
        </ControlRow>
      </Controls>
      <LayerList>
        <LayerRow $group>
          <IconButton $w={24} aria-label="Видимость"><Eye /></IconButton>
          <LayerBody $group><GroupToggle aria-label="Свернуть"><Chevron /></GroupToggle>Монтажная область 1</LayerBody>
        </LayerRow>
        {layers.map((l) => (
          <LayerRow key={l.name} $selected={l.selected}>
            <IconButton $w={24} aria-label="Видимость"><Eye /></IconButton>
            <LayerBody>
              <LayerThumb $selected={l.selected}>
                <span />
                {l.mark && <ThumbMark $x={l.mark.x} $y={l.mark.y} $w={l.mark.w} />}
                {l.mark && <ThumbBadge $selected={l.selected}><BoxIcon s={10} /></ThumbBadge>}
              </LayerThumb>
              {l.name}
            </LayerBody>
          </LayerRow>
        ))}
      </LayerList>
      <LayerActions>
        <IconButton $w={22} $dim aria-label="Связать слои"><LinkIcon /></IconButton>
        <EffectsButton $w={21} $h={18} aria-label="Стиль слоя">fx<Flyout /></EffectsButton>
        <IconButton $w={21} aria-label="Маска слоя"><Svg w={10} h={8}><path fillRule="evenodd" d="M0 0h10v8H0zM5 1.500a2.500 2.500 0 100 5 2.500 2.500 0 000-5z" /></Svg></IconButton>
        <IconButton $w={22} $h={18} aria-label="Корректирующий слой"><HalfCircle /><Flyout /></IconButton>
        <IconButton $w={21} aria-label="Группа"><Svg w={10} h={8}><path d="M0 0h4l1 1.200h5V8H0z" /></Svg></IconButton>
        <IconButton $w={21} aria-label="Новый слой"><Svg w={9} h={9} stroke><path d="M1 4V1h7v7H5.500M1 4h3.500v4z" /></Svg></IconButton>
        <IconButton $w={22} aria-label="Удалить"><Svg w={9} h={10} stroke><path d="M0 2h9M3 2V.6h3V2M1.300 2l.4 7.400h5.600L7.700 2M3.300 3.500v4.500M5.700 3.500v4.500" strokeWidth="1" /></Svg></IconButton>
      </LayerActions>
    </Layers>
  );
}

export default function PhotoEditor() {
  return (
    <App>
      <Global />
      <MenuBar>
        <FaApple size={12} />
        <MenuItem $bold href="#">Photoshop CC</MenuItem>
        {menu.map((m) => <MenuItem key={m} href="#">{m}</MenuItem>)}
      </MenuBar>
      <TitleBar>
        <Lights>
          <Light $color="#f8504c" aria-label="Закрыть окно"><Svg w={3} h={3}><circle cx="1.500" cy="1.500" r="1.500" fill="#6d1512" /></Svg></Light>
          <Light $color="#f7b02d" aria-label="Свернуть окно" />
          <Light $color="#30c03f" aria-label="Развернуть окно" />
        </Lights>
        <Title>Adobe Photoshop CC 2017</Title>
      </TitleBar>
      <OptionsBar />
      <Workspace>
        <ToolPanel />
        <DocumentView />
        <Dock>
          <Strip $right><DoubleArrow /></Strip>
          <Tabs>
            <Tab>История</Tab>
            <Tab>Символ</Tab>
            <Tab $active>Свойства</Tab>
            <PanelMenu aria-label="Меню панели"><MenuLines /></PanelMenu>
          </Tabs>
          <PropertiesPanel />
          <Tabs>
            <Tab $active>Слои</Tab>
            <PanelMenu aria-label="Меню слоёв"><MenuLines /></PanelMenu>
          </Tabs>
          <LayersPanel />
        </Dock>
      </Workspace>
    </App>
  );
}
